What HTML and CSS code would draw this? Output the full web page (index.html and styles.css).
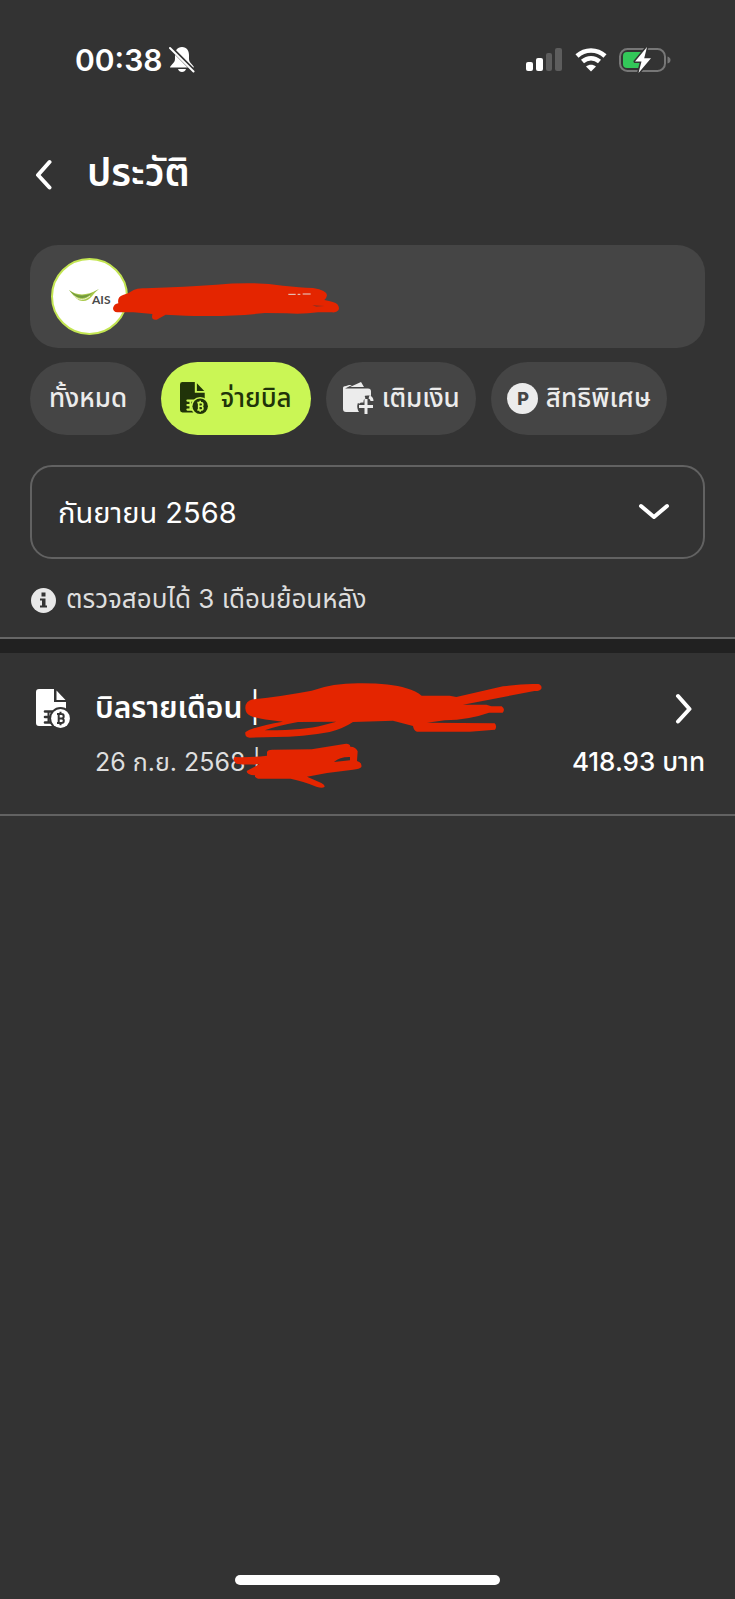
FILE: index.html
```html
<!DOCTYPE html>
<html lang="th">
<head>
    <meta charset="UTF-8">
    <meta name="viewport" content="width=device-width, initial-scale=1.0">
    <title>ประวัติ</title>
    <link rel="stylesheet" href="styles.css">
</head>
<body>
    <svg width="0" height="0" class="defs" aria-hidden="true">
        <defs>
            <mask id="billCut">
                <rect width="34" height="40" fill="#fff"/>
                <circle cx="24.5" cy="29.5" r="11.4" fill="#000"/>
                <path d="M9 22.500H16M9 28H16M9 33.500H16" stroke="#000" stroke-width="2.600" stroke-linecap="round"/>
                <path d="M12.500 22V34" stroke="#000" stroke-width="2"/>
            </mask>
            <symbol id="bill" viewBox="0 0 34 40">
                <path mask="url(#billCut)" d="M3 0H18V13H30V37H3A3 3 0 0 1 0 34V3A3 3 0 0 1 3 0Z"/>
                <path d="M20.500 1.500L29.500 11H20.500Z"/>
                <circle cx="24.500" cy="29.500" r="9.400"/>
                <path class="baht" d="M21 25H25.500a2.200 2.200 0 0 1 0 4.400H22.500M25.500 29.400a2.300 2.300 0 0 1 0 4.600H21M22.700 25V34M24.500 22.800V25M24.500 34V36.200"/>
            </symbol>
        </defs>
    </svg>

    <div class="status-bar">
        <div class="clock">
            <span>00:38</span>
            <svg width="26" height="28" viewBox="0 0 26 28">
                <path d="M13 1C8 1 6 5 6 9V13C6 17 1.500 19 1 21.500H25C24.500 19 20 17 20 13V9C20 5 18 1 13 1ZM9 23H17C16 27 10 27 9 23Z" fill="#fff"/>
                <path d="M1 1L26 26" stroke="#333" stroke-width="4"/>
                <path d="M1 2L24.500 25.500" stroke="#fff" stroke-width="2" stroke-linecap="round"/>
            </svg>
        </div>
        <div class="indicators">
            <svg width="37" height="24" viewBox="0 0 37 24">
                <rect x="0" y="14" width="7" height="9" rx="2" fill="#fff"/>
                <rect x="10" y="10" width="7" height="13" rx="2" fill="#fff"/>
                <rect x="20" y="5" width="6" height="18" rx="2" fill="#5d5d5d"/>
                <rect x="29" y="0" width="7" height="23" rx="2" fill="#5d5d5d"/>
            </svg>
            <svg width="32" height="24" viewBox="0 0 32 24">
                <path d="M2 8C10 .500 22 .500 30 8M7.500 13.500C12.500 9 19.500 9 24.500 13.500" fill="none" stroke="#fff" stroke-width="4.500"/>
                <path d="M11 18.500C14 16 18 16 21 18.500L16 23.500Z" fill="#fff"/>
            </svg>
            <svg width="52" height="26" viewBox="0 0 52 26">
                <rect x="1" y="2" width="45" height="22" rx="7.500" fill="none" stroke="#777" stroke-width="2"/>
                <path d="M8 5H25V21H8Q4 21 4 17V9Q4 5 8 5Z" fill="#33c759"/>
                <path d="M48.500 9.500Q51.500 10.500 51.500 13T48.500 16.500Z" fill="#777"/>
                <path d="M28 0L16 14.500H22.500L19.500 26L32 11.200H25.200Z" fill="#fff" stroke="#333" stroke-width="3" paint-order="stroke" stroke-linejoin="round"/>
            </svg>
        </div>
    </div>

    <header class="header">
        <button class="back" aria-label="ย้อนกลับ">
            <svg width="17" height="32" viewBox="0 0 17 32"><path d="M14.500 3L3 16L14.500 28.500"/></svg>
        </button>
        <h1>ประวัติ</h1>
    </header>

    <main>
        <section class="account">
            <div class="avatar">
                <svg width="44" height="20" viewBox="0 0 44 20">
                    <path d="M1 3C8 8 17 10 31 2C25 6 23 14 15 14C9 14 6 9 1 3Z" fill="#a9c94a"/>
                    <path d="M1 3C10 11 20 10 31 2C23 6 20 11 14 11C8 11 5 7 1 3Z" fill="#71993e"/>
                    <path d="M6 9C12 14 17 13 22 9" fill="none" stroke="#eef3d8" stroke-width="1"/>
                    <text x="24" y="17">AIS</text>
                </svg>
            </div>
            <svg class="scribble scribble-account" width="227" height="40" viewBox="280 140 681 120">
                <path d="M280 218Q284 205 296 204Q292 184 310 179Q330 173 342 164Q355 157 378 159Q500 154 590 148Q700 138 790 151Q840 156 880 158Q922 165 922 180Q921 188 914 194Q945 199 953 207Q961 217 956 225Q951 232 938 231L895 231Q850 237 800 234L735 233Q650 243 550 242Q500 242 438 238L411 253Q398 255 397 245L398 236L342 231H293Q280 230 280 218Z"/>
                <path d="M806 177H828M834 177H842M849 176H873" stroke="#e6d9d2" stroke-width="3"/>
                <path d="M878 209L914 212L890 214Z" fill="#8e3020"/>
            </svg>
        </section>

        <nav class="chips">
            <button class="chip">ทั้งหมด</button>
            <button class="chip with-icon active">
                <svg width="28" height="33"><use href="#bill"/></svg>
                จ่ายบิล
            </button>
            <button class="chip with-icon">
                <svg width="32" height="33" viewBox="0 0 32 33">
                    <path d="M4 4L7 3H10L3 6.500H26Q29 6.500 29 9.500V14C23 12.500 20 15 19 18C15 20 14 25 17 30H4Q1 30 1 27V6Q1 4 4 4Z"/>
                    <path d="M8 5L19 0L22 5Z"/>
                    <path d="M24 17V32M17 24.500H31M16 21Q17 19 20 19Q20 16 23 15M27 15Q30 16 30 19" fill="none" stroke="#ececec" stroke-width="3"/>
                </svg>
                เติมเงิน
            </button>
            <button class="chip with-icon">
                <svg class="coin" width="31" height="31" viewBox="0 0 31 31">
                    <circle cx="15.500" cy="15.500" r="15.500"/>
                    <text x="16" y="22">P</text>
                </svg>
                สิทธิพิเศษ
            </button>
        </nav>

        <div class="month">
            <select aria-label="เดือน">
                <option>กันยายน 2568</option>
                <option>สิงหาคม 2568</option>
                <option>กรกฎาคม 2568</option>
            </select>
            <svg width="32" height="18" viewBox="0 0 32 18"><path d="M3 3L16 14L29 3"/></svg>
        </div>

        <p class="hint">
            <svg width="25" height="25" viewBox="0 0 25 25">
                <circle cx="12.500" cy="12.500" r="12.500"/>
                <path d="M10.500 4.500H14.500V8.500H10.500ZM9 10.500H14.500V17.500H16V19.500H9V17.500H11V12.500H9Z" fill="#333"/>
            </svg>
            ตรวจสอบได้ 3 เดือนย้อนหลัง
        </p>
    </main>

    <section class="bills">
        <a href="#" class="bill">
            <svg class="bill-icon" width="34" height="40"><use href="#bill"/></svg>
            <span class="bill-title">บิลรายเดือน <i>|</i></span>
            <svg class="arrow" width="17" height="32" viewBox="0 0 17 32"><path d="M3 3L14.500 16L3 28.500"/></svg>
            <span class="bill-date">26 ก.ย. 2568 <i>|</i></span>
            <strong class="bill-price">418.93 บาท</strong>
            <svg class="scribble scribble-bill" width="313" height="110" viewBox="640 30 939 330">
                <path d="M677 115Q676 94 700 88Q780 80 876 62Q940 40 1015 40Q1110 39 1160 55Q1190 64 1206 77H1290L1310 81L1450 49Q1510 40 1556 42Q1568 46 1565 56Q1560 64 1544 63L1330 104H1400L1415 109H1446Q1458 118 1449 128H1408Q1350 149 1275 151L1222 158L1425 160Q1433 169 1426 179L1350 185H1192Q1182 182 1180 168L1120 152L1000 156Q970 176 930 186Q850 201 765 201L690 203Q675 201 677 187Q700 170 790 155Q710 147 692 137Q678 132 677 115ZM735 181Q850 182 910 166L950 155L835 156Q770 168 735 181Z" fill-rule="evenodd"/>
                <path d="M646 261Q690 263 742 257V246Q746 238 760 239L876 238L974 222Q990 219 992 230Q1009 230 1014 244L1012 273Q1028 278 1025 291Q1020 298 1000 299Q930 306 862 320L905 339Q918 346 914 351Q908 356 890 350Q850 333 813 326H716Q705 323 706 316Q681 315 681 303L720 282Q680 286 650 281Q635 268 646 261ZM943 276L991 271V261Q961 260 943 276Z" fill-rule="evenodd"/>
            </svg>
        </a>
    </section>

    <div class="home-indicator"></div>
</body>
</html>
```
FILE: styles.css
```css
* {
    box-sizing: border-box;
}
body {
    margin: 0;
    min-height: 100vh;
    display: flex;
    flex-direction: column;
    background: #333;
    color: #fff;
    font-family: "Inter", "Noto Sans Thai", "Liberation Sans", sans-serif;
    font-size: 29px;
}
svg {
    display: block;
    flex-shrink: 0;
}
.defs {
    position: absolute;
}
.baht {
    fill: none;
    stroke: var(--baht, #333);
    stroke-width: 2;
}
button, select {
    font: inherit;
    color: inherit;
    border: none;
    background: none;
    cursor: pointer;
}
.status-bar {
    display: flex;
    justify-content: space-between;
    align-items: center;
    height: 120px;
    padding: 0 64px 0 75px;
}
.clock {
    display: flex;
    align-items: center;
    gap: 7px;
    font-size: 30px;
    font-weight: 600;
}
.indicators {
    display: flex;
    align-items: center;
    gap: 12px;
}
.header {
    display: flex;
    align-items: center;
    gap: 35px;
    height: 110px;
    padding: 0 35px;
}
.back {
    padding: 0;
}
.back path, .arrow path, .month path {
    fill: none;
    stroke: #fff;
    stroke-width: 4;
    stroke-linecap: round;
    stroke-linejoin: round;
}
h1 {
    margin: 0;
    padding-bottom: 7px;
    font-size: 39px;
    font-weight: 600;
    line-height: 50px;
}
main {
    padding: 15px 30px 0;
    border-bottom: 2px solid #666;
}
.account {
    position: relative;
    padding: 13px 21px;
    border-radius: 28px;
    background: #454545;
}
.avatar {
    display: flex;
    align-items: center;
    justify-content: center;
    width: 77px;
    height: 77px;
    border: 2px solid #c3e552;
    border-radius: 50%;
    background: #fff;
}
.avatar svg {
    overflow: visible;
}
.avatar text {
    font: 700 12px "Lato", sans-serif;
    fill: #4a4a4a;
}
.scribble {
    position: absolute;
    fill: #e42500;
}
.scribble-account {
    left: 83px;
    top: 37px;
}
.chips {
    display: flex;
    gap: 15px;
    margin-top: 14px;
}
.chip {
    display: flex;
    align-items: center;
    gap: 8px;
    height: 73px;
    padding: 0 19px;
    border-radius: 37px;
    background: #454545;
    color: #ececec;
    fill: #ececec;
    font-size: 26px;
    font-weight: 500;
    white-space: nowrap;
}
.chip.with-icon {
    padding: 0 16px;
}
.chip.active {
    --baht: #caf655;
    gap: 12px;
    padding: 0 19px;
    background: #caf655;
    color: #203309;
    fill: #203309;
}
.coin text {
    font: 800 18px "Inter", sans-serif;
    text-anchor: middle;
    fill: #454545;
}
.month {
    display: grid;
    align-items: center;
    margin-top: 30px;
}
.month select, .month svg {
    grid-area: 1 / 1;
}
.month select {
    appearance: none;
    width: 100%;
    height: 94px;
    padding: 0 26px;
    border: 2px solid #626262;
    border-radius: 22px;
}
.month svg {
    justify-self: end;
    margin-right: 35px;
    pointer-events: none;
}
.hint {
    display: flex;
    align-items: center;
    gap: 10px;
    height: 78px;
    margin: 0;
    padding: 4px 0 0 1px;
    color: #dedede;
    fill: #e8e8e8;
    font-size: 26px;
}
.bills {
    border-top: 14px solid #212121;
}
.bill {
    position: relative;
    display: grid;
    grid-template-columns: 59px 1fr auto;
    grid-template-rows: 54px 54px;
    align-items: center;
    padding: 29px 30px 24px 36px;
    border-bottom: 2px solid #626262;
    color: #fff;
    fill: #fff;
    text-decoration: none;
}
.bill i {
    font-style: normal;
    font-weight: 400;
}
.bill-title {
    font-size: 30px;
    font-weight: 600;
}
.arrow {
    justify-self: end;
    margin-right: 13px;
}
.bill-date {
    grid-column: 2;
    color: #dedede;
    font-size: 25px;
}
.bill-price {
    font-size: 26px;
    font-weight: 500;
}
.scribble-bill {
    left: 233px;
    top: 27px;
}
.home-indicator {
    width: 36%;
    height: 10px;
    margin: auto auto 14px;
    border-radius: 5px;
    background: #fff;
}
```
